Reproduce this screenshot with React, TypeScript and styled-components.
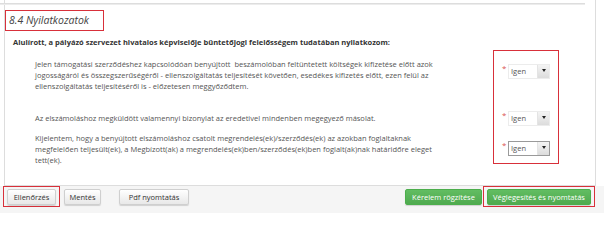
import styled, { createGlobalStyle } from "styled-components";

const GlobalStyle = createGlobalStyle`
    html, body {
        margin: 0;
        padding: 0;
        background: #fff;
    }
    body {
        font-family: "Open Sans", "DejaVu Sans", sans-serif;
        color: #555;
    }
`;

const Page = styled.div`
    width: 604px;
    height: 213px;
    overflow: hidden;
`;

const Panel = styled.section`
    box-sizing: border-box;
    width: 592px;
    height: 186px;
    margin-left: 4px;
    border-left: 1px solid #ddd;
    border-right: 1px solid #ddd;
    border-bottom: 1px solid #ddd;
    padding-top: 3px;
`;

const Rule = styled.div`
    width: 585px;
    height: 0;
    margin-left: -5px;
    border-top: 1px solid #ddd;
    border-bottom: 1px solid #ececec;
`;

// red frame used to mark the parts of the form that were highlighted
const Highlight = styled.div`
    display: inline-flex;
    box-sizing: border-box;
    border: 1px solid #d8303a;
`;

const TitleFrame = styled(Highlight)`
    margin-top: 5px;
    width: 99px;
    height: 21px;
`;

const Title = styled.h2`
    margin: 0;
    padding: 0 0 0 3px;
    font-size: 10.5px;
    line-height: 19px;
    font-style: italic;
    font-weight: 400;
    color: #444;
    white-space: nowrap;
`;

const Lead = styled.p`
    margin: 6px 0 0 8px;
    font-size: 7.5px;
    line-height: 11px;
    font-weight: 700;
    color: #333;
`;

const Content = styled.div`
    display: flex;
    margin-top: 1.5px;
    padding-left: 30px;
`;

const Statements = styled.div`
    width: 458px;
    padding-top: 9.5px;
`;

const Statement = styled.p<{ $gap: number }>`
    margin: ${(p) => p.$gap}px 0 0 0;
    font-size: 7.5px;
    line-height: 11px;
    color: #555;
    white-space: nowrap;
`;

const Answers = styled.div`
    box-sizing: border-box;
    width: 66px;
    height: 114px;
    border: 1px solid #d8303a;
    padding: 13px 0 0 8px;
`;

const AnswerRow = styled.div<{ $gap: number }>`
    display: flex;
    align-items: flex-start;
    margin-top: ${(p) => p.$gap}px;
`;

const Required = styled.span`
    width: 6px;
    font-size: 8px;
    line-height: 8px;
    color: #d9534f;
`;

const SelectBox = styled.div<{ $focused?: boolean }>`
    box-sizing: border-box;
    display: flex;
    width: 42px;
    height: 15px;
    background: #fff;
    border: 1px solid ${(p) => (p.$focused ? "#9a9a9a" : "#ececec")};
`;

const SelectValue = styled.span`
    flex: 1;
    padding-left: 2px;
    font-size: 7.5px;
    line-height: 13px;
    color: #555;
`;

const SelectArrow = styled.span`
    width: 12px;
    display: flex;
    justify-content: center;
    padding-top: 4px;
    box-sizing: border-box;
    background: linear-gradient(#f4f4f4, #dcdcdc);
    border-left: 1px solid #e4e4e4;

    &::after {
        content: "";
        width: 0;
        height: 0;
        border-left: 2.5px solid transparent;
        border-right: 2.5px solid transparent;
        border-top: 3px solid #222;
    }
`;

const Footer = styled.footer`
    display: flex;
    align-items: center;
    height: 21px;
    padding: 0 9px 0 3px;
    background: #f5f5f5;
    border-bottom: 6px solid #f5f5f5;
`;

const Group = styled.div<{ $right?: boolean }>`
    display: flex;
    align-items: center;
    gap: 1px;
    margin-left: ${(p) => (p.$right ? "auto" : "0")};
`;

const Button = styled.button<{ $primary?: boolean; $space?: number; $width: number }>`
    box-sizing: border-box;
    width: ${(p) => p.$width}px;
    height: 16px;
    margin: ${(p) => (p.$space ? `0 0 0 ${p.$space}px` : "0")};
    padding: 0;
    font-family: "Open Sans", "DejaVu Sans", sans-serif;
    font-size: 7.5px;
    line-height: 14px;
    text-align: center;
    white-space: nowrap;
    border-radius: 2px;
    border: 1px solid ${(p) => (p.$primary ? "#4cae4c" : "#cfcfcf")};
    color: ${(p) => (p.$primary ? "#fff" : "#333")};
    background: ${(p) =>
        p.$primary
            ? "linear-gradient(#62bd62, #4faa4f)"
            : "linear-gradient(#ffffff, #e8e8e8)"};
    box-shadow: 0 1px 1px rgba(0, 0, 0, 0.15);
`;

const Padded = styled(Highlight)`
    padding: 1.5px 3px;
`;

const answers = [
    { gap: 0, focused: false },
    { gap: 32.5, focused: false },
    { gap: 14.5, focused: true },
];

function App() {
    return (
        <Page>
            <GlobalStyle />
            <Panel>
                <Rule />
                <TitleFrame>
                    <Title>8.4 Nyilatkozatok</Title>
                </TitleFrame>
                <Lead>
                    Alulírott, a pályázó szervezet hivatalos képviselője büntetőjogi felelősségem tudatában nyilatkozom:
                </Lead>
                <Content>
                    <Statements>
                        <Statement $gap={0}>
                            Jelen támogatási szerződéshez kapcsolódóan benyújtott&nbsp; beszámolóban feltüntetett költségek kifizetése előtt azok
                            <br />
                            jogosságáról és összegszerűségéről - ellenszolgáltatás teljesítését követően, esedékes kifizetés előtt, ezen felül az
                            <br />
                            ellenszolgáltatás teljesítéséről is - előzetesen meggyőződtem.
                        </Statement>
                        <Statement $gap={21}>
                            Az elszámoláshoz megküldött valamennyi bizonylat az eredetivel mindenben megegyező másolat.
                        </Statement>
                        <Statement $gap={9}>
                            Kijelentem, hogy a benyújtott elszámoláshoz csatolt megrendelés(ek)/szerződés(ek) az azokban foglaltaknak
                            <br />
                            megfelelően teljesült(ek), a Megbízott(ak) a megrendelés(ek)ben/szerződés(ek)ben foglalt(ak)nak határidőre eleget
                            <br />
                            tett(ek).
                        </Statement>
                    </Statements>
                    <Answers>
                        {answers.map((a, index) => (
                            <AnswerRow key={index} $gap={a.gap}>
                                <Required>*</Required>
                                <SelectBox $focused={a.focused}>
                                    <SelectValue>Igen</SelectValue>
                                    <SelectArrow />
                                </SelectBox>
                            </AnswerRow>
                        ))}
                    </Answers>
                </Content>
            </Panel>
            <Footer>
                <Group>
                    <Padded>
                        <Button $width={49}>Ellenőrzés</Button>
                    </Padded>
                    <Button $width={37} $space={3}>Mentés</Button>
                    <Button $width={70} $space={17}>Pdf nyomtatás</Button>
                </Group>
                <Group $right>
                    <Button $primary $width={77}>Kérelem rögzítése</Button>
                    <Padded>
                        <Button $primary $width={104}>Véglegesítés és nyomtatás</Button>
                    </Padded>
                </Group>
            </Footer>
        </Page>
    );
}

export default App;
